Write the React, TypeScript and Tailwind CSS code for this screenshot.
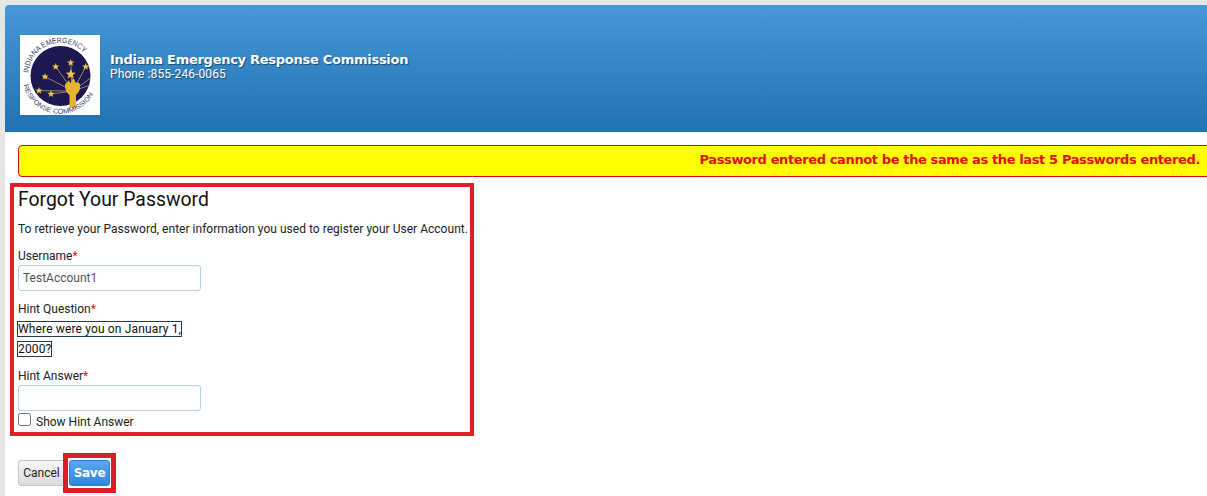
import React from "react";

function Star({ x, y, r = 5 }: { x: number; y: number; r?: number }) {
  const pts: string[] = [];
  for (let i = 0; i < 10; i++) {
    const a = -Math.PI / 2 + (i * Math.PI) / 5;
    const rad = i % 2 === 0 ? r : r * 0.42;
    pts.push(`${x + rad * Math.cos(a)},${y + rad * Math.sin(a)}`);
  }
  return <polygon points={pts.join(" ")} fill="#f4c63f" />;
}

function Logo() {
  const stars: [number, number, number][] = [
    [35.7, 31.7, 3.8], [50.7, 27.7, 3.8], [65.7, 31.7, 3.8], [25, 41.7, 3.8],
    [50.7, 39.3, 5.2], [19, 55.7, 3.8], [31, 59, 3.8],
  ];
  return (
    <svg width="80" height="80" viewBox="0 0 80 80" className="mt-[12px] shrink-0 bg-white">
      <defs>
        <path id="arcTop" d="M 8.6 38 A 32 32 0 0 1 71 30" />
        <path id="arcBottom" d="M 3.6 50 A 37.5 37.5 0 0 0 76 52" />
      </defs>
      <circle cx="40.5" cy="41" r="30" fill="#1d1850" />
      {stars.map(([x, y], i) => (
        <line key={i} x1={x} y1={y} x2="53" y2="56" stroke="#b3a06a" strokeWidth="0.8" />
      ))}
      <line x1="70.5" y1="43" x2="53" y2="56" stroke="#b3a06a" strokeWidth="0.8" />
      <line x1="70.5" y1="50" x2="53" y2="56" stroke="#b3a06a" strokeWidth="0.8" />
      {stars.map(([x, y, r], i) => (
        <Star key={i} x={x} y={y} r={r} />
      ))}
      <path d="M45 50 C46 47 48 48 48.5 45 C50 47 50 48 51 48 C51 46 53 45 53 43 C55 45 55 47 56 48 C57 47 58 47 60 49 L60 53 C60 56 57 59 56 60 L56 71 L57.5 73 L48 73 L49.5 71 L49.5 60 C47 58 45 55 45 50 Z" fill="#e6b52f" />
      <text fontSize="7.6" fill="#3d3c6e" fontFamily="'Liberation Sans', sans-serif">
        <textPath href="#arcTop" textLength="74" lengthAdjust="spacingAndGlyphs">INDIANA EMERGENCY</textPath>
      </text>
      <text fontSize="6.6" fill="#3d3c6e" fontFamily="'Liberation Sans', sans-serif">
        <textPath href="#arcBottom" textLength="90" lengthAdjust="spacingAndGlyphs">RESPONSE COMMISSION</textPath>
      </text>
    </svg>
  );
}

function Label({ children }: { children: React.ReactNode }) {
  return (
    <div className="h-[17px] text-[12px] leading-[19px] text-[#222]">
      {children}
      <span className="text-[#e02020]">*</span>
    </div>
  );
}

const inputClass =
  "block w-[183px] h-[26px] rounded-[3px] border border-[#b5d3e3] bg-white px-[4px] text-[12px] text-[#555] outline-none font-['Roboto',sans-serif]";

export default function App() {
  return (
    <div className="h-[496px] w-[1207px] overflow-hidden bg-[#e6e6e6] pt-[5px] pl-[5px] font-['Roboto',sans-serif]">
      <div className="h-[491px] overflow-hidden rounded-tl-[4px] bg-white">
        <header className="flex h-[127px] items-center gap-[10px] bg-gradient-to-b from-[#4798d6] to-[#1f72b3] pl-[15px] text-white">
          <Logo />
          <div className="-mt-[5px] [text-shadow:1px_1px_1px_#1a4a78]">
            <div className="font-['DejaVu_Sans',sans-serif] text-[13px] leading-[15px] font-bold tracking-[-0.27px]">
              Indiana Emergency Response Commission
            </div>
            <div className="text-[12px] leading-[14px] tracking-[0.1px]">Phone :855-246-0065</div>
          </div>
        </header>

        <div className="mt-[13px] mr-[-12px] ml-[13px] flex h-[32px] items-center justify-end rounded-[4px] border border-[#d01010] bg-[#ffff00] pr-[18px] pb-[2px] font-['DejaVu_Sans',sans-serif] text-[13px] font-bold tracking-[-0.38px] text-[#e01010]">
          Password entered cannot be the same as the last 5 Passwords entered.
        </div>

        <section className="mt-[6px] ml-[5px] h-[253px] w-[464px] border-4 border-[#e01f26] pl-[4px]">
          <h1 className="text-[19.4px] leading-[26px] text-[#111]">Forgot Your Password</h1>
          <p className="mt-[8px] text-[12px] leading-[17px] tracking-[0.025px] whitespace-nowrap text-[#222]">
            To retrieve your Password, enter information you used to register your User Account.
          </p>
          <div className="mt-[9px]">
            <Label>Username</Label>
            <input className={`${inputClass} mt-[1px]`} defaultValue="TestAccount1" readOnly />
          </div>
          <div className="mt-[9px]">
            <Label>Hint Question</Label>
            <div className="mt-[2px] w-[170px] text-[12px] leading-[20px] tracking-[0.15px] text-[#111]">
              <span className="outline outline-1 outline-[#2a3a4a]">
                Where were you on January 1, 2000?
              </span>
            </div>
          </div>
          <div className="mt-[8px]">
            <Label>Hint Answer</Label>
            <input className={`${inputClass} mt-[1px]`} readOnly />
          </div>
          <label className="flex h-[20px] items-center text-[12px] text-[#222]">
            <input type="checkbox" className="m-0 -mt-[4px] h-[13px] w-[13px]" />
            <span className="mt-[2px] ml-[5px]">Show Hint Answer</span>
          </label>
        </section>

        <div className="mt-[17px] ml-[13px] flex items-start">
          <button className="mt-[7px] h-[26px] w-[47px] rounded-l-[3px] border border-[#c4c4c4] bg-gradient-to-b from-[#f6f6f6] to-[#dcdcdc] text-[12px] text-[#222]">
            Cancel
          </button>
          <div className="-ml-[2px] h-[40px] w-[53px] border-[5px] border-[#d81f26] pt-[2px] pl-[1px]">
            <button className="block h-[26px] w-[41px] rounded-[3px] border border-[#2f7fd0] bg-gradient-to-b from-[#5aa7ee] to-[#2f86e0] font-['DejaVu_Sans',sans-serif] text-[12px] font-bold tracking-[-0.3px] text-white">
              Save
            </button>
          </div>
        </div>
      </div>
    </div>
  );
}
